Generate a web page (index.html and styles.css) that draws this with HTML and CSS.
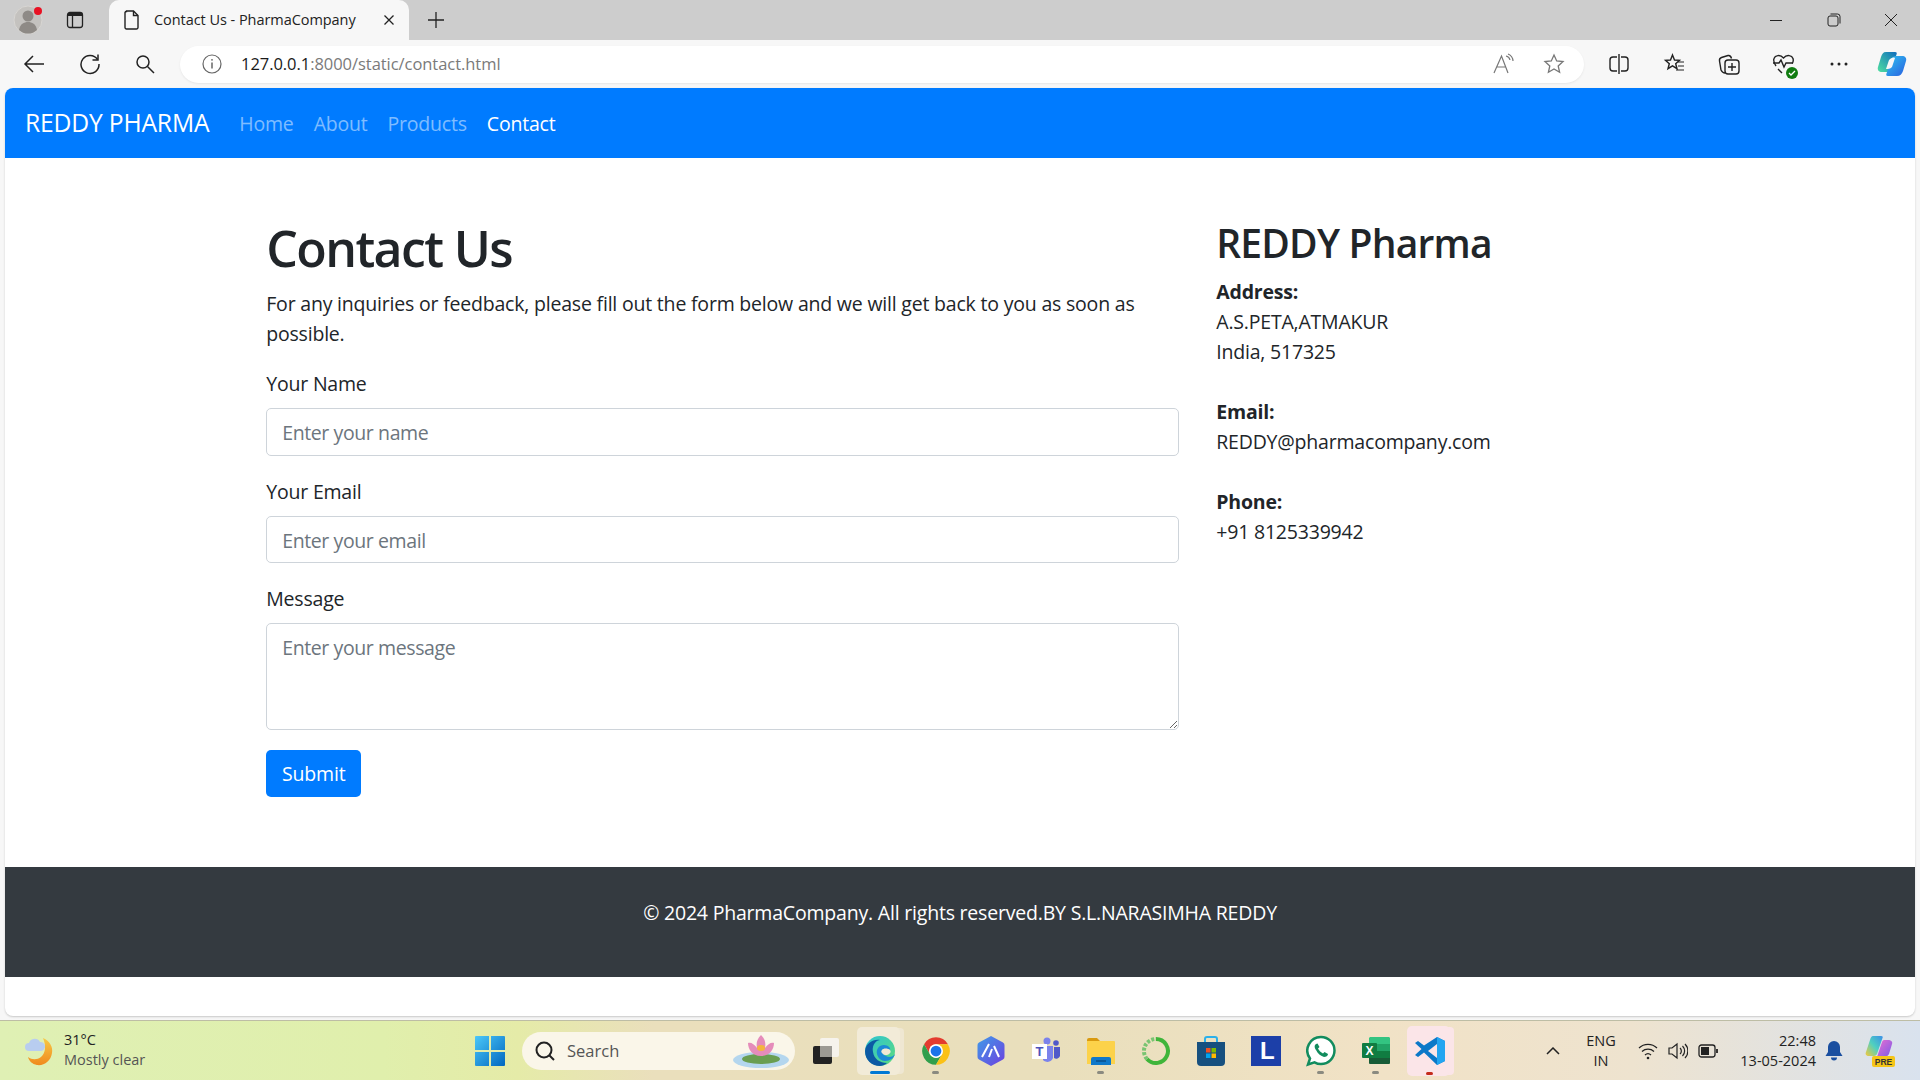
FILE: index.html
```html
<!DOCTYPE html>
<html lang="en">
<head>
  <meta charset="UTF-8" />
  <title>Contact Us - PharmaCompany</title>
  <link rel="stylesheet" href="styles.css">
</head>
<body>
  <div class="tabstrip">
    <div class="avatar">
      <svg width="30" height="30" viewBox="0 0 30 30"><circle cx="15" cy="15" r="14" fill="#c4c2bf" stroke="#d8d6d3"/><circle cx="15" cy="11" r="5.5" fill="#8e8a86"/><path d="M6 25c1-6 5-8 9-8s8 2 9 8a13 13 0 0 1-18 0z" fill="#8e8a86"/></svg>
      <span class="avatar-dot"></span>
    </div>
    <div class="strip-btn">
      <svg width="18" height="18" viewBox="0 0 18 18" fill="none" stroke="#222" stroke-width="1.3"><rect x="1.5" y="1.5" width="15" height="15" rx="2.5"/><path d="M2 3.5h14" stroke-width="3"/><path d="M6.5 5v11"/></svg>
    </div>
    <div class="tab">
      <svg width="16" height="20" viewBox="0 0 16 20" fill="none" stroke="#222" stroke-width="1.4"><path d="M2.5 1h7l4.500 4.500v12a1.500 1.500 0 0 1-1.500 1.500h-10a1.500 1.500 0 0 1-1.500-1.500v-15a1.500 1.500 0 0 1 1.500-1z"/><path d="M9.500 1v4.500h4.500"/></svg>
      <span class="tab-title">Contact Us - PharmaCompany</span>
      <svg class="tab-close" width="12" height="12" viewBox="0 0 12 12" stroke="#222" stroke-width="1.300"><path d="M1.500 1.500l9 9M10.500 1.500l-9 9"/></svg>
    </div>
    <svg class="new-tab" width="18" height="18" viewBox="0 0 18 18" stroke="#222" stroke-width="1.300"><path d="M9 1v16M1 9h16"/></svg>
    <div class="window-btns">
      <svg width="14" height="14" viewBox="0 0 14 14" stroke="#222"><path d="M1 7.500h12"/></svg>
      <svg width="14" height="14" viewBox="0 0 14 14" fill="none" stroke="#222"><rect x="1" y="3" width="10" height="10" rx="2"/><path d="M3.500 1h7a2.500 2.500 0 0 1 2.500 2.500v7"/></svg>
      <svg width="14" height="14" viewBox="0 0 14 14" stroke="#222"><path d="M1 1l12 12M13 1l-12 12"/></svg>
    </div>
  </div>

  <div class="toolbar">
    <div class="tool-btn"><svg width="22" height="22" viewBox="0 0 22 22" fill="none" stroke="#222" stroke-width="1.500"><path d="M21 11H2M10 3l-8 8 8 8"/></svg></div>
    <div class="tool-btn"><svg width="22" height="22" viewBox="0 0 22 22" fill="none" stroke="#222" stroke-width="1.500"><path d="M18.500 6.500A9 9 0 1 0 20 11"/><path d="M19 1.500v5.500h-5.500"/></svg></div>
    <div class="tool-btn"><svg width="20" height="20" viewBox="0 0 20 20" fill="none" stroke="#222" stroke-width="1.500"><circle cx="8" cy="8" r="6"/><path d="M12.500 12.500L19 19"/></svg></div>
    <div class="address-bar">
      <svg width="20" height="20" viewBox="0 0 20 20" fill="none" stroke="#666" stroke-width="1.200"><circle cx="10" cy="10" r="9"/><path d="M10 8.500v6" stroke-width="1.500"/><circle cx="10" cy="5.800" r=".9" fill="#666" stroke="none"/></svg>
      <span class="url"><span class="url-host">127.0.0.1</span>:8000/static/contact.html</span>
      <svg class="read-icon" width="24" height="22" viewBox="0 0 24 22" fill="none" stroke="#777" stroke-width="1.200"><path d="M1 20L8.500 3 15 20M4 14h9"/><path d="M13 3a5 5 0 0 1 4 4M15 1a8 8 0 0 1 5 7"/></svg>
      <svg class="star-icon" width="22" height="22" viewBox="0 0 22 22" fill="none" stroke="#777" stroke-width="1.300"><path d="M11 2l2.700 6 6.300.6-4.800 4.300 1.400 6.400L11 16l-5.600 3.300 1.400-6.400L2 8.600 8.300 8z"/></svg>
    </div>
    <div class="tool-group">
      <div class="tool-btn"><svg width="22" height="22" viewBox="0 0 22 22" fill="none" stroke="#222" stroke-width="1.400"><path d="M9 4H5a3 3 0 0 0-3 3v8a3 3 0 0 0 3 3h4M13 4h4a3 3 0 0 1 3 3v8a3 3 0 0 1-3 3h-4"/><path d="M11 1v20"/></svg></div>
      <div class="tool-btn"><svg width="22" height="22" viewBox="0 0 22 22" fill="none" stroke="#222" stroke-width="1.400"><path d="M9.500 2l2 5 5 .4-3.800 3.300 1.300 5-4.500-2.800L5 15.700l1.300-5L2.500 7.400l5-.4z"/><path d="M15 9h6M15 13h6M13 17h8" stroke-width="1.200"/></svg></div>
      <div class="tool-btn"><svg width="22" height="22" viewBox="0 0 22 22" fill="none" stroke="#222" stroke-width="1.400"><path d="M7 20c-2 0-3-1-4-3L1.500 8c-.3-2 .5-3 2-3.500L10 2.500c1.500-.3 3 .5 3.500 3"/><rect x="7" y="7" width="14" height="14" rx="3" fill="#f7f7f7"/><path d="M14 10v8M10 14h8"/></svg></div>
      <div class="tool-btn health-btn">
        <svg width="24" height="24" viewBox="0 0 24 24" fill="none" stroke="#222" stroke-width="1.400"><path d="M4 14C2 11 1 9 2 6.500 3 3.500 8 2 11.500 6c3.500-4 8.500-2.500 9.500.5.600 2 .2 3.500-.8 5"/><path d="M1 11h6l2-3 3 7 2-4h7M6 17l4 4"/></svg>
        <svg class="health-check" width="12" height="12" viewBox="0 0 12 12"><circle cx="6" cy="6" r="6" fill="#107c10"/><path d="M3 6l2 2 4-4" fill="none" stroke="#fff" stroke-width="1.300"/></svg>
      </div>
      <div class="tool-btn"><svg width="20" height="6" viewBox="0 0 20 6" fill="#222"><circle cx="3" cy="3" r="1.500"/><circle cx="10" cy="3" r="1.500"/><circle cx="17" cy="3" r="1.500"/></svg></div>
      <div class="tool-btn copilot-btn">
        <svg width="30" height="28" viewBox="0 0 30 28"><defs><linearGradient id="cpa" x1="0" y1="1" x2="1" y2="0"><stop offset="0" stop-color="#4fe0a0"/><stop offset="1" stop-color="#0f6cbd"/></linearGradient><linearGradient id="cpb" x1="0" y1="0" x2="1" y2="1"><stop offset="0" stop-color="#2ec4f0"/><stop offset="1" stop-color="#2a5fe0"/></linearGradient></defs><path d="M9 2h9c2 0 2 1 1.500 2.500L14 20c-.5 1.500-2 2-4 2H5c-3 0-5-2-4-5l3-10C5 4 6 2 9 2z" fill="url(#cpa)"/><path d="M21 6h4c3 0 5 2 4 5l-3 10c-1 3-3 5-6 5h-9c-2 0-2-1-1.500-2.500L15 8c.5-1.500 3-2 6-2z" fill="url(#cpb)"/><path d="M12 10c2-2 4-3 6-2l-3 9c-2 2-4 2-6 2z" fill="#f7f7f7"/></svg>
      </div>
    </div>
  </div>

  <div class="viewport">
    <nav class="navbar">
      <a class="brand">REDDY PHARMA</a>
      <a class="nav-link">Home</a>
      <a class="nav-link">About</a>
      <a class="nav-link">Products</a>
      <a class="nav-link active">Contact</a>
    </nav>

    <main class="container">
      <div class="col-main">
        <h1>Contact Us</h1>
        <p class="intro">For any inquiries or feedback, please fill out the form below and we will get back to you as soon as possible.</p>
        <form>
          <div class="form-group">
            <label for="name">Your Name</label>
            <input type="text" id="name" class="form-control" placeholder="Enter your name">
          </div>
          <div class="form-group">
            <label for="email">Your Email</label>
            <input type="email" id="email" class="form-control" placeholder="Enter your email">
          </div>
          <div class="form-group">
            <label for="message">Message</label>
            <textarea id="message" class="form-control message" placeholder="Enter your message"></textarea>
          </div>
          <button type="button" class="submit">Submit</button>
        </form>
      </div>
      <div class="col-side">
        <h2>REDDY Pharma</h2>
        <p><strong>Address:</strong><br>A.S.PETA,ATMAKUR<br>India, 517325</p>
        <p><strong>Email:</strong><br>REDDY@pharmacompany.com</p>
        <p><strong>Phone:</strong><br>+91 8125339942</p>
      </div>
    </main>

    <footer class="footer">© 2024 PharmaCompany. All rights reserved.BY S.L.NARASIMHA REDDY</footer>
  </div>

  <div class="taskbar">
    <div class="weather">
      <svg width="32" height="34" viewBox="0 0 32 34"><defs><linearGradient id="moon" x1="0" y1="0" x2="0" y2="1"><stop offset="0" stop-color="#f7c948"/><stop offset="1" stop-color="#f08a1d"/></linearGradient></defs><path d="M20 4c7 3 10 9 9 15-1 8-8 13-15 12-5-1-8-4-9-8 4 3 9 3 13 0 5-4 5-12 2-19z" fill="url(#moon)"/><path d="M6 17a4 4 0 0 1 0-8 6 6 0 0 1 11-1 4.500 4.500 0 0 1 1 9z" fill="#b8cdf0"/></svg>
      <div class="weather-text">
        <span class="temp">31°C</span>
        <span class="sky">Mostly clear</span>
      </div>
    </div>

    <div class="task-center">
      <div class="app app-start">
        <svg width="30" height="30" viewBox="0 0 30 30"><defs><linearGradient id="win" x1="0" y1="0" x2="1" y2="1"><stop offset="0" stop-color="#4cc8f8"/><stop offset="1" stop-color="#0067c0"/></linearGradient></defs><path d="M0 1a1 1 0 0 1 1-1h13v14H0zM16 0h13a1 1 0 0 1 1 1v13H16zM0 16h14v14H1a1 1 0 0 1-1-1zM16 16h14v13a1 1 0 0 1-1 1H16z" fill="url(#win)"/></svg>
      </div>
      <div class="search-pill">
        <svg width="22" height="22" viewBox="0 0 22 22" fill="none" stroke="#222" stroke-width="2"><circle cx="10" cy="10" r="7.500"/><path d="M15.500 15.500L20 20"/></svg>
        <span>Search</span>
        <svg class="lotus" width="58" height="36" viewBox="0 0 58 36"><ellipse cx="29" cy="27" rx="28" ry="8" fill="#b4d6ee"/><ellipse cx="29" cy="26" rx="19" ry="5" fill="#6a9e50"/><path d="M29 2c4 4 5 8 4 13 3-4 6-6 9-5 0 6-4 13-13 13s-13-7-13-13c3-1 6 1 9 5-1-5 0-9 4-13z" fill="#e58cba"/><ellipse cx="29" cy="15" rx="4" ry="3" fill="#f4b53f"/></svg>
      </div>
      <div class="app">
        <svg width="28" height="28" viewBox="0 0 28 28"><rect x="1" y="9" width="19" height="18" rx="2" fill="#222"/><rect x="8" y="1" width="19" height="19" rx="2" fill="#f6f3ec"/><rect x="8" y="9" width="12" height="11" fill="#9c9a94"/></svg>
      </div>
      <div class="app app-active">
        <svg width="32" height="32" viewBox="0 0 32 32"><defs><linearGradient id="edge" x1="0" y1="0" x2="1" y2="1"><stop offset="0" stop-color="#2bc3d6"/><stop offset="1" stop-color="#5fdc7a"/></linearGradient></defs><circle cx="16" cy="16" r="15" fill="url(#edge)"/><path d="M1 16C2 8 9 4 16 5c-6 1-8 7-7 12 1 7 7 11 14 11-2 2-5 3-7 3C8 31 1 25 1 16z" fill="#0c59a4"/><path d="M31 19c-2 3-6 4-9 2-3-1-4-4-2-6 2-1 5-1 6 0 1-2-2-5-6-5-5 0-8 4-7 9 1 4 4 7 8 7 5 0 9-3 10-7z" fill="#1c8ad6"/><path d="M18 15c1-2 6-2 8 0 1 1 1 3-1 4-2 2-6 1-7-1-1-1-1-2 0-3z" fill="#f1e9d3"/></svg>
      </div>
      <div class="app app-open">
        <svg width="30" height="30" viewBox="0 0 24 24"><path d="M2.470 6.500A11 11 0 0 1 21.530 6.500H12A5.500 5.500 0 0 0 7.240 14.750z" fill="#e33b2e"/><path d="M2.470 6.500A11 11 0 0 0 12 23L16.760 14.750A5.500 5.500 0 0 1 7.240 14.750z" fill="#319f4c"/><path d="M21.530 6.500A11 11 0 0 1 12 23L16.760 14.750A5.500 5.500 0 0 0 12 6.500z" fill="#fbc116"/><circle cx="12" cy="12" r="5.500" fill="#fff"/><circle cx="12" cy="12" r="4.300" fill="#1a73e8"/></svg>
      </div>
      <div class="app">
        <svg width="28" height="30" viewBox="0 0 28 30"><defs><linearGradient id="ark" x1="0" y1="0" x2="1" y2="1"><stop offset="0" stop-color="#3f9ce8"/><stop offset="1" stop-color="#6d3fe0"/></linearGradient></defs><path d="M14 0l12 6.500a3 3 0 0 1 1.500 3v11a3 3 0 0 1-1.500 3L14 30 2 23.500a3 3 0 0 1-1.500-3v-11a3 3 0 0 1 1.500-3z" fill="url(#ark)"/><path d="M5 21l7-13M12 21l3-8M22 21l-5-11" stroke="#fff" stroke-width="2" fill="none"/></svg>
      </div>
      <div class="app">
        <svg width="30" height="30" viewBox="0 0 30 30"><circle cx="16" cy="5" r="3.500" fill="#7b83eb"/><circle cx="25" cy="7" r="2.800" fill="#5059c9"/><path d="M12 10h10v12a6 6 0 0 1-10 2z" fill="#7b83eb"/><path d="M23 11h6v9a4 4 0 0 1-6 2z" fill="#5059c9"/><rect x="1" y="8" width="15" height="15" fill="#fff"/><text x="8.500" y="20" class="teams-t">T</text></svg>
      </div>
      <div class="app app-open">
        <svg width="30" height="30" viewBox="0 0 30 30"><path d="M1 4a2 2 0 0 1 2-2h8l3 3h-13z" fill="#d99a10"/><path d="M1 5h27a1 1 0 0 1 1 1v22H1z" fill="#fcd24a"/><path d="M5 29v-6a2 2 0 0 1 2-2h16a2 2 0 0 1 2 2v6z" fill="#0f78c9"/><path d="M10 25h10" stroke="#0a4f8a" stroke-width="1.500"/></svg>
      </div>
      <div class="app">
        <svg width="30" height="30" viewBox="0 0 30 30" fill="none"><path d="M15 3a12 12 0 1 1-9 20" stroke="#3fb53a" stroke-width="4"/><path d="M6 23A12 12 0 0 1 15 3" stroke="#79c472" stroke-width="4" stroke-dasharray="3 1.500"/></svg>
      </div>
      <div class="app">
        <svg width="30" height="32" viewBox="0 0 30 32"><path d="M9 8V4a2 2 0 0 1 2-2h8a2 2 0 0 1 2 2v4" fill="none" stroke="#2bb0ea" stroke-width="2"/><path d="M1 7h28v20a4 4 0 0 1-4 4H5a4 4 0 0 1-4-4z" fill="#17507f"/><rect x="10" y="13" width="4.500" height="4.500" fill="#f25022"/><rect x="15.500" y="13" width="4.500" height="4.500" fill="#7fba00"/><rect x="10" y="18.500" width="4.500" height="4.500" fill="#00a4ef"/><rect x="15.500" y="18.500" width="4.500" height="4.500" fill="#ffb900"/></svg>
      </div>
      <div class="app">
        <svg width="30" height="30" viewBox="0 0 30 30"><rect width="30" height="30" fill="#1c3fa8"/><text x="9" y="23" class="letter-l">L</text></svg>
      </div>
      <div class="app app-open">
        <svg width="30" height="32" viewBox="0 0 30 32"><path d="M15 2a13.500 13.500 0 0 1 0 27c-2.500 0-4.500-.6-6.500-1.700L2 29.500l2-6A13.500 13.500 0 0 1 15 2z" fill="#fff" stroke="#128c5e" stroke-width="2.500"/><path d="M10 9c-1.500 1-2 3 0 6 2 4 5 6 8 7 2 0 4-1 4-3l-3.500-2-1.500 1.500c-2-1-4-3-5-5l1.500-1.500-2-3.500z" fill="#128c5e"/></svg>
      </div>
      <div class="app app-open">
        <svg width="30" height="30" viewBox="0 0 30 30"><path d="M9 1h19a2 2 0 0 1 1 1v6H8V2z" fill="#33c481"/><rect x="8" y="8" width="21" height="7" fill="#21a366"/><rect x="8" y="15" width="21" height="7" fill="#107c41"/><path d="M8 22h21v5a1 1 0 0 1-1 1H9a1 1 0 0 1-1-1z" fill="#185c37"/><rect x="1" y="7" width="15" height="15" rx="1" fill="#107c41"/><text x="8.500" y="19" class="excel-x">X</text></svg>
      </div>
      <div class="app app-code">
        <svg width="32" height="32" viewBox="0 0 32 32"><path d="M23 2l8 4v20l-8 4-13-12.500-6 4.500-3-2 6.500-6L1 8l3-2 6 4.500z" fill="#0b78c8"/><path d="M23 2l8 4v20l-8 4z" fill="#22a5f1"/><path d="M23 9v14l-9-7z" fill="#fbe5e8"/></svg>
      </div>
    </div>

    <div class="tray">
      <svg class="chevron" width="14" height="8" viewBox="0 0 14 8" fill="none" stroke="#222" stroke-width="1.500"><path d="M1 7l6-6 6 6"/></svg>
      <div class="lang"><span>ENG</span><span>IN</span></div>
      <div class="tray-icons">
        <svg width="20" height="18" viewBox="0 0 20 18" fill="none" stroke="#222" stroke-width="1.300"><path d="M1 6a13 13 0 0 1 18 0M4 9.500a9 9 0 0 1 12 0M7 13a4.500 4.500 0 0 1 6 0"/><circle cx="10" cy="16" r="1.300" fill="#222" stroke="none"/></svg>
        <svg width="20" height="20" viewBox="0 0 20 20" fill="none" stroke="#222" stroke-width="1.200"><path d="M1 7v6h3l5 4V3L4 7z"/><path d="M12 7a4 4 0 0 1 0 6M14.500 5a7 7 0 0 1 0 10M17 3a10 10 0 0 1 0 14"/></svg>
        <svg width="20" height="14" viewBox="0 0 20 14" fill="none" stroke="#222" stroke-width="1.300"><rect x="1" y="1" width="16" height="12" rx="2.500"/><rect x="3" y="3" width="8" height="8" fill="#222" stroke="none"/><path d="M19 5v4" stroke-width="1.800"/></svg>
      </div>
      <div class="clock"><span>22:48</span><span>13-05-2024</span></div>
      <svg class="bell" width="18" height="20" viewBox="0 0 18 20"><path d="M9 0a6 6 0 0 1 6 6v5l2.500 4H.5L3 11V6a6 6 0 0 1 6-6z" fill="#1a4fa0"/><path d="M6 16.500h6a3 3 0 0 1-6 0z" fill="#1a4fa0"/></svg>
      <svg class="copilot-pre" width="30" height="32" viewBox="0 0 30 32"><defs><linearGradient id="cpc" x1="0" y1="1" x2="1" y2="0"><stop offset="0" stop-color="#f5c93a"/><stop offset=".5" stop-color="#4fd0c0"/><stop offset="1" stop-color="#3a8fe8"/></linearGradient><linearGradient id="cpd" x1="0" y1="0" x2="1" y2="1"><stop offset="0" stop-color="#e96fd0"/><stop offset="1" stop-color="#7a5ae8"/></linearGradient></defs><path d="M8 1h8c2 0 2 1 1.500 2L12 19c-.5 1-2 2-3 2H4c-3 0-4-2-3-4L5 5c.5-2 1.500-4 3-4z" fill="url(#cpc)"/><path d="M19 5h4c3 0 5 2 4 4l-3 10c-1 2-3 3-5 3h-7l5-15c.5-1 1-2 2-2z" fill="url(#cpd)"/><rect x="7" y="21" width="23" height="11" rx="2" fill="#f5c518"/><text x="18.500" y="30" class="pre-text">PRE</text></svg>
    </div>
  </div>
</body>
</html>
```

FILE: styles.css
```css
* {
  box-sizing: border-box;
}

body {
  margin: 0;
  height: 100vh;
  overflow: hidden;
  display: flex;
  flex-direction: column;
  background-color: #f7f7f7;
  color: #212529;
  font-family: "Open Sans", "Noto Sans", sans-serif;
}

/* browser chrome */
.tabstrip {
  height: 40px;
  flex: none;
  display: flex;
  align-items: center;
  background-color: #cdcdcd;
  font-size: 14.5px;
}

.avatar {
  position: relative;
  width: 30px;
  height: 30px;
  margin-left: 13px;
}

.avatar-dot {
  position: absolute;
  top: 2px;
  right: 1px;
  width: 8px;
  height: 8px;
  border-radius: 50%;
  background-color: #e81123;
}

.strip-btn {
  display: flex;
  margin-left: 23px;
}

.tab {
  width: 300px;
  height: 40px;
  margin-left: 25px;
  padding: 0 14px 0 15px;
  display: flex;
  align-items: center;
  background-color: #f7f7f7;
  border-radius: 10px 10px 0 0;
}

.tab-title {
  margin-left: 14px;
  padding-bottom: 2px;
  flex: 1;
  color: #222;
  letter-spacing: -0.05px;
}

.new-tab {
  margin-left: 18px;
}

.window-btns {
  margin-left: auto;
  width: 151px;
  padding: 0 22px 0 0;
  display: flex;
  justify-content: space-between;
}

.toolbar {
  height: 48px;
  flex: none;
  display: flex;
  align-items: center;
  padding-left: 11px;
}

.tool-btn {
  position: relative;
  width: 55px;
  display: flex;
  justify-content: center;
  align-items: center;
  flex: none;
}

.toolbar > .tool-btn {
  width: 46px;
  margin-right: 9px;
}

.toolbar > .tool-btn:first-child {
  margin-right: 10px;
}

.address-bar {
  width: 1404px;
  height: 37px;
  margin-left: 3px;
  padding: 0 19px 0 22px;
  display: flex;
  align-items: center;
  background-color: #fff;
  border-radius: 19px;
  box-shadow: 0 1px 2px #e6e6e6;
}

.url {
  margin-left: 19px;
  padding-bottom: 2px;
  flex: 1;
  font-size: 16.5px;
  color: #7a7a7a;
  letter-spacing: -0.05px;
}

.url-host {
  color: #1a1a1a;
}

.star-icon {
  margin-left: 26px;
}

.tool-group {
  display: flex;
  margin-left: 7px;
}

.copilot-btn {
  margin-left: -2px;
}

.health-check {
  position: absolute;
  right: 13px;
  bottom: -1px;
}

/* page */
.viewport {
  flex: 1;
  margin: 0 5px 4px;
  overflow: hidden;
  background-color: #fff;
  border-radius: 8px;
  box-shadow: 0 1px 2px #c8c8c8;
  font-size: 19.5px;
  letter-spacing: -0.2px;
  line-height: 30px;
}

.navbar {
  height: 70px;
  padding: 0 20px;
  display: flex;
  align-items: center;
  background-color: #007bff;
}

.brand {
  margin-right: 20px;
  font-size: 24.7px;
  color: #fff;
}

.nav-link {
  padding: 2px 10px 0;
  color: rgba(255, 255, 255, 0.5);
}

.nav-link.active {
  color: #fff;
}

.container {
  width: 1425px;
  margin: 60px auto 0;
  display: flex;
}

.col-main {
  width: 950px;
  padding: 0 18.75px;
}

.col-side {
  width: 475px;
  padding: 0 18.75px;
}

h1 {
  margin: 0 0 10px;
  font-size: 50px;
  line-height: 60px;
  font-weight: 600;
  letter-spacing: -1.6px;
}

h2 {
  margin: 0 0 9px;
  padding-top: 1px;
  font-size: 39px;
  line-height: 48px;
  font-weight: 600;
  letter-spacing: -0.8px;
}

p {
  margin: 0 0 29px;
  padding-top: 1px;
}

.intro {
  margin-bottom: 19px;
}

strong {
  font-weight: 700;
}

.form-group {
  margin-bottom: 20px;
}

label {
  display: block;
  margin-bottom: 9px;
  padding-top: 1px;
}

.form-control {
  display: block;
  width: 100%;
  height: 47.5px;
  padding: 8.5px 15px 6.5px;
  border: 1px solid #ced4da;
  border-radius: 5px;
  background-color: #fff;
  color: #495057;
  font: inherit;
  letter-spacing: -0.4px;
}

.form-control::placeholder {
  color: #6c757d;
  opacity: 1;
}

.message {
  height: 106.5px;
}

.submit {
  width: 95px;
  height: 47.5px;
  padding-top: 3px;
  border: none;
  border-radius: 5px;
  background-color: #007bff;
  color: #fff;
  font: inherit;
  letter-spacing: inherit;
}

.footer {
  height: 110px;
  margin-top: 70px;
  padding-top: 31px;
  background-color: #343a40;
  color: #fff;
  text-align: center;
}

/* taskbar */
.taskbar {
  height: 60px;
  flex: none;
  display: flex;
  align-items: center;
  border-top: 1px solid #bdbda5;
  background: linear-gradient(90deg, #dff0b4 0%, #e0efac 20%, #e5eba8 27%, #eadfbc 34%, #e9dfbc 55%, #f1e2c6 72%, #eee3cf 85%, #d9e2ee 100%);
  font-size: 14.5px;
  color: #222;
}

.weather {
  width: 462px;
  padding-left: 23px;
  display: flex;
  align-items: center;
  gap: 9px;
}

.weather-text {
  display: flex;
  flex-direction: column;
  padding-bottom: 2px;
  line-height: 20px;
}

.sky {
  color: #555;
}

.task-center {
  display: flex;
  align-items: center;
}

.app {
  position: relative;
  width: 55px;
  height: 48px;
  display: flex;
  justify-content: center;
  align-items: center;
  flex: none;
}

.app-start {
  margin-right: 5px;
}

.app-open::after,
.app-active::after,
.app-code::after {
  content: "";
  position: absolute;
  bottom: 1px;
  left: 24px;
  width: 7px;
  height: 3px;
  border-radius: 2px;
  background-color: #8a8a80;
}

.app-active {
  width: 43px;
  margin: 0 8.5px 0 3.5px;
  padding-left: 3px;
  background-color: #f2ebd8;
  border-radius: 5px;
  box-shadow: 5px 0 0 -1px #efe7d2;
}

.app-active::after {
  left: 13px;
  width: 20px;
  background-color: #0078d4;
}

.app-code {
  width: 43px;
  height: 50px;
  margin: 0 8.5px 0 3.5px;
  padding-left: 3px;
  background-color: #fbe5e8;
  border-radius: 5px;
  box-shadow: 5px 0 0 -1px #fbe5e8;
}

.app-code::after {
  left: 19px;
  background-color: #c42b1c;
}

.search-pill {
  width: 273px;
  height: 38px;
  margin-right: 3px;
  padding-left: 12px;
  display: flex;
  align-items: center;
  gap: 11px;
  background-color: #faf6e9;
  border-radius: 19px;
  font-size: 16.5px;
  color: #555;
}

.lotus {
  margin-left: auto;
  margin-right: 5px;
}

.teams-t {
  font-family: "Liberation Sans", sans-serif;
  font-size: 13px;
  font-weight: 700;
  fill: #4b53bc;
  text-anchor: middle;
}

.letter-l {
  font-family: "Liberation Sans", sans-serif;
  font-size: 24px;
  font-weight: 700;
  fill: #fff;
}

.excel-x {
  font-family: "Liberation Sans", sans-serif;
  font-size: 12px;
  font-weight: 700;
  fill: #fff;
  text-anchor: middle;
}

.pre-text {
  font-family: "Liberation Sans", sans-serif;
  font-size: 8.500px;
  font-weight: 700;
  fill: #333;
  text-anchor: middle;
}

.tray {
  margin-left: auto;
  padding-right: 25px;
  display: flex;
  align-items: center;
}

.lang {
  width: 44px;
  margin-left: 19px;
  display: flex;
  flex-direction: column;
  align-items: center;
  line-height: 20px;
}

.tray-icons {
  margin-left: 15px;
  display: flex;
  align-items: center;
  gap: 10px;
}

.clock {
  margin-left: 8px;
  width: 90px;
  display: flex;
  flex-direction: column;
  align-items: flex-end;
  line-height: 20px;
}

.bell {
  margin-left: 9px;
}

.copilot-pre {
  margin-left: 22px;
}
```
